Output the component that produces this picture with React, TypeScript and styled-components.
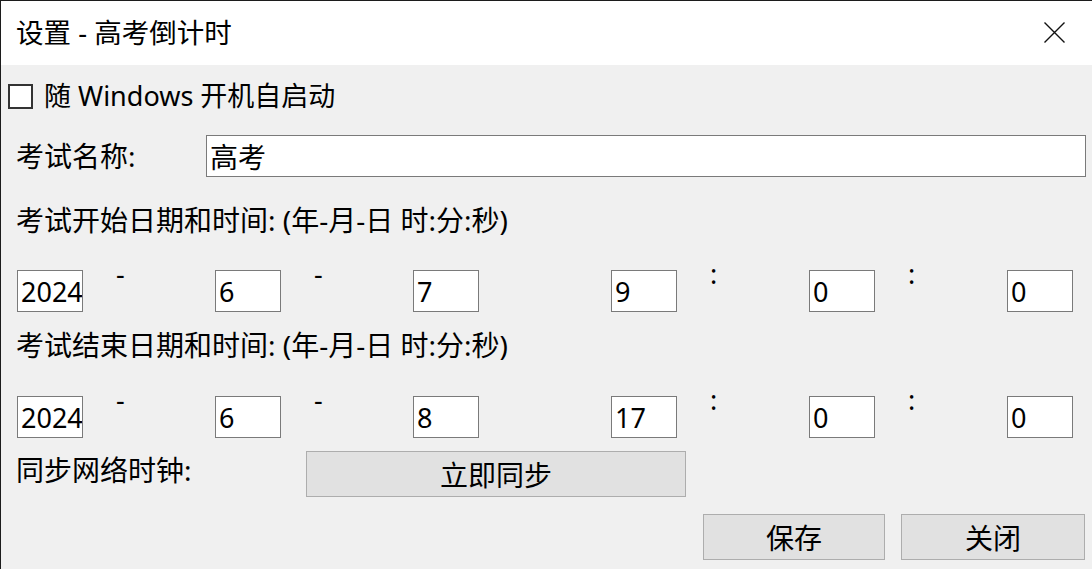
import React from 'react';
import styled, { createGlobalStyle } from 'styled-components';

const GlobalStyle = createGlobalStyle`
  html, body {
    margin: 0;
    padding: 0;
    background: #f0f0f0;
  }
  body {
    font-family: "Noto Sans", "Noto Sans CJK SC", sans-serif;
    color: #000;
  }
  * {
    box-sizing: border-box;
  }
`;

const FONT = 28;

const App = () => {
  const startValues = ['2024', '6', '7', '9', '0', '0'];
  const endValues = ['2024', '6', '8', '17', '0', '0'];
  const seps = ['-', '-', '', ':', ':', ''];

  return (
    <>
      <GlobalStyle />
      <StyledWindow>
        <StyledTitleBar>
          <StyledTitle>设置 - 高考倒计时</StyledTitle>
          <StyledCloseButton aria-label="关闭">
            <svg width="21" height="21" viewBox="0 0 21 21">
              <path d="M0.5 0.5 L20.5 20.5 M20.5 0.5 L0.5 20.5" stroke="#111" strokeWidth="1.4" fill="none" />
            </svg>
          </StyledCloseButton>
        </StyledTitleBar>

        <StyledBody>
          <StyledCheckRow $top={15}>
            <StyledCheckbox />
            <StyledText>随 Windows 开机自启动</StyledText>
          </StyledCheckRow>

          <StyledNameRow $top={23}>
            <StyledLabel>考试名称:</StyledLabel>
            <StyledNameInput defaultValue="高考" />
          </StyledNameRow>

          <StyledSectionLabel $top={26}>考试开始日期和时间: (年-月-日 时:分:秒)</StyledSectionLabel>

          <StyledTimeRow $top={33}>
            {startValues.map((v, i) => (
              <StyledTimeCell key={i}>
                <StyledTimeInput defaultValue={v} />
                {seps[i] && <StyledSep>{seps[i]}</StyledSep>}
              </StyledTimeCell>
            ))}
          </StyledTimeRow>

          <StyledSectionLabel $top={16}>考试结束日期和时间: (年-月-日 时:分:秒)</StyledSectionLabel>

          <StyledTimeRow $top={34}>
            {endValues.map((v, i) => (
              <StyledTimeCell key={i}>
                <StyledTimeInput defaultValue={v} />
                {seps[i] && <StyledSep>{seps[i]}</StyledSep>}
              </StyledTimeCell>
            ))}
          </StyledTimeRow>

          <StyledSyncRow $top={13}>
            <StyledSyncLabel>同步网络时钟:</StyledSyncLabel>
            <StyledButton $width={380}>立即同步</StyledButton>
          </StyledSyncRow>

          <StyledFooter $top={17}>
            <StyledButton $width={182}>保存</StyledButton>
            <StyledButton $width={184}>关闭</StyledButton>
          </StyledFooter>
        </StyledBody>
      </StyledWindow>
    </>
  );
};

export default App;

const StyledWindow = styled.div`
  width: 1092px;
  height: 569px;
  border-top: 1px solid #1c1c1c;
  border-left: 1px solid #1c1c1c;
  background: #f0f0f0;
  display: flex;
  flex-direction: column;
  overflow: hidden;
`;

const StyledTitleBar = styled.header`
  height: 64px;
  background: #fff;
  display: flex;
  align-items: center;
  justify-content: space-between;
  padding: 0 27px 0 15px;
`;

const StyledTitle = styled.div`
  font-size: 27.5px;
  line-height: 1;
`;

const StyledCloseButton = styled.div`
  width: 21px;
  height: 21px;
  display: flex;
  margin-top: -2px;
`;

const StyledBody = styled.div`
  display: flex;
  flex-direction: column;
  padding: 0 6px 0 0;
  font-size: ${FONT}px;
`;

const StyledRowBase = styled.div<{ $top: number }>`
  margin-top: ${({ $top }) => $top}px;
  display: flex;
  align-items: center;
`;

const StyledCheckRow = styled(StyledRowBase)`
  height: 32px;
  padding-left: 7px;
  gap: 11px;
`;

const StyledCheckbox = styled.div`
  width: 25px;
  height: 25px;
  border: 2px solid #333;
  background: #fff;
`;

const StyledText = styled.span`
  line-height: 32px;
  white-space: nowrap;
  font-size: 27px;
`;

const StyledNameRow = styled(StyledRowBase)`
  height: 42px;
  padding-left: 15px;
`;

const StyledLabel = styled.span`
  width: 190px;
  white-space: nowrap;
  line-height: 34px;
`;

const StyledNameInput = styled.input`
  flex: 1;
  height: 42px;
  border: 1px solid #7a7a7a;
  background: #fff;
  font: inherit;
  font-size: ${FONT}px;
  padding: 0 3px;
  outline: none;
  color: #000;
`;

const StyledSectionLabel = styled.div<{ $top: number }>`
  margin-top: ${({ $top }) => $top}px;
  height: 34px;
  line-height: 34px;
  padding-left: 15px;
  white-space: nowrap;
`;

const StyledTimeRow = styled(StyledRowBase)`
  height: 42px;
  padding-left: 16px;
  align-items: flex-start;
`;

const StyledTimeCell = styled.div`
  flex: none;
  width: 198px;
  display: flex;
  align-items: flex-start;

  &:last-child {
    width: auto;
  }
`;

const StyledTimeInput = styled.input`
  width: 66px;
  height: 42px;
  border: 1px solid #7a7a7a;
  background: #fff;
  font: inherit;
  font-size: 27px;
  padding: 0 0 0 3px;
  outline: none;
  color: #000;
`;

const StyledSep = styled.span`
  margin-left: 33px;
  margin-top: -10px;
  line-height: 27px;
  font-size: 27px;
`;

const StyledSyncRow = styled(StyledRowBase)`
  height: 46px;
  padding-left: 15px;
  align-items: flex-start;
`;

const StyledSyncLabel = styled.span`
  width: 290px;
  margin-top: 2px;
  line-height: 34px;
  white-space: nowrap;
`;

const StyledButton = styled.div<{ $width: number }>`
  width: ${({ $width }) => $width}px;
  height: 46px;
  background: #e1e1e1;
  border: 1px solid #adadad;
  display: flex;
  align-items: center;
  justify-content: center;
  font-size: ${FONT}px;
`;

const StyledFooter = styled(StyledRowBase)`
  height: 46px;
  justify-content: flex-end;
  gap: 16px;
  padding-right: 1px;
`;
